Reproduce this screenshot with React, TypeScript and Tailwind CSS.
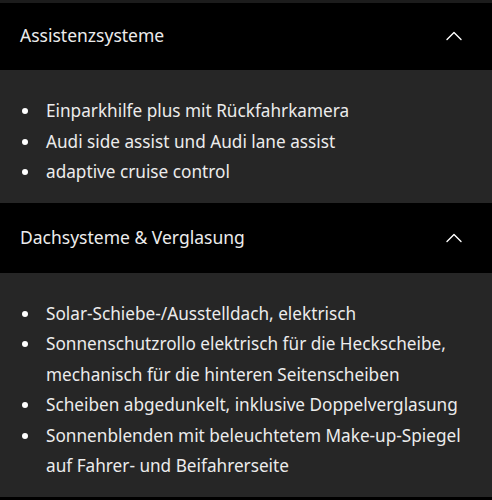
import { ChevronUp } from "lucide-react";

const sections = [
  {
    title: "Assistenzsysteme",
    items: [
      "Einparkhilfe plus mit Rückfahrkamera",
      "Audi side assist und Audi lane assist",
      "adaptive cruise control",
    ],
  },
  {
    title: "Dachsysteme & Verglasung",
    items: [
      "Solar-Schiebe-/Ausstelldach, elektrisch",
      "Sonnenschutzrollo elektrisch für die Heckscheibe, mechanisch für die hinteren Seitenscheiben",
      "Scheiben abgedunkelt, inklusive Doppelverglasung",
      "Sonnenblenden mit beleuchtetem Make-up-Spiegel auf Fahrer- und Beifahrerseite",
    ],
  },
];

export default function App() {
  return (
    <div
      className="w-[492px] h-[500px] overflow-hidden bg-black text-[#ececec]"
      style={{ fontFamily: '"Noto Sans", "Open Sans", sans-serif' }}
    >
      <div className="h-[3px] bg-[#1c1c1c]" />
      {sections.map((s, i) => (
        <div key={s.title}>
          <div
            className={`flex items-center justify-between bg-black pl-5 pr-[24px] ${
              i === 0 ? "h-[67px] pb-[2px]" : "h-[70px]"
            }`}
          >
            <span className="text-[17.5px]">{s.title}</span>
            <ChevronUp className="h-7 w-7 text-white" strokeWidth={1.2} />
          </div>
          <ul className="bg-[#262626] pt-[26px] pb-[15px] pl-[22px] pr-4 text-[17.2px] leading-[30.5px]">
            {s.items.map((it) => (
              <li key={it} className="flex">
                <span className="flex w-6 shrink-0 pt-[12px]">
                  <span className="h-[6px] w-[6px] rounded-full bg-white" />
                </span>
                <span>{it}</span>
              </li>
            ))}
          </ul>
        </div>
      ))}
    </div>
  );
}
